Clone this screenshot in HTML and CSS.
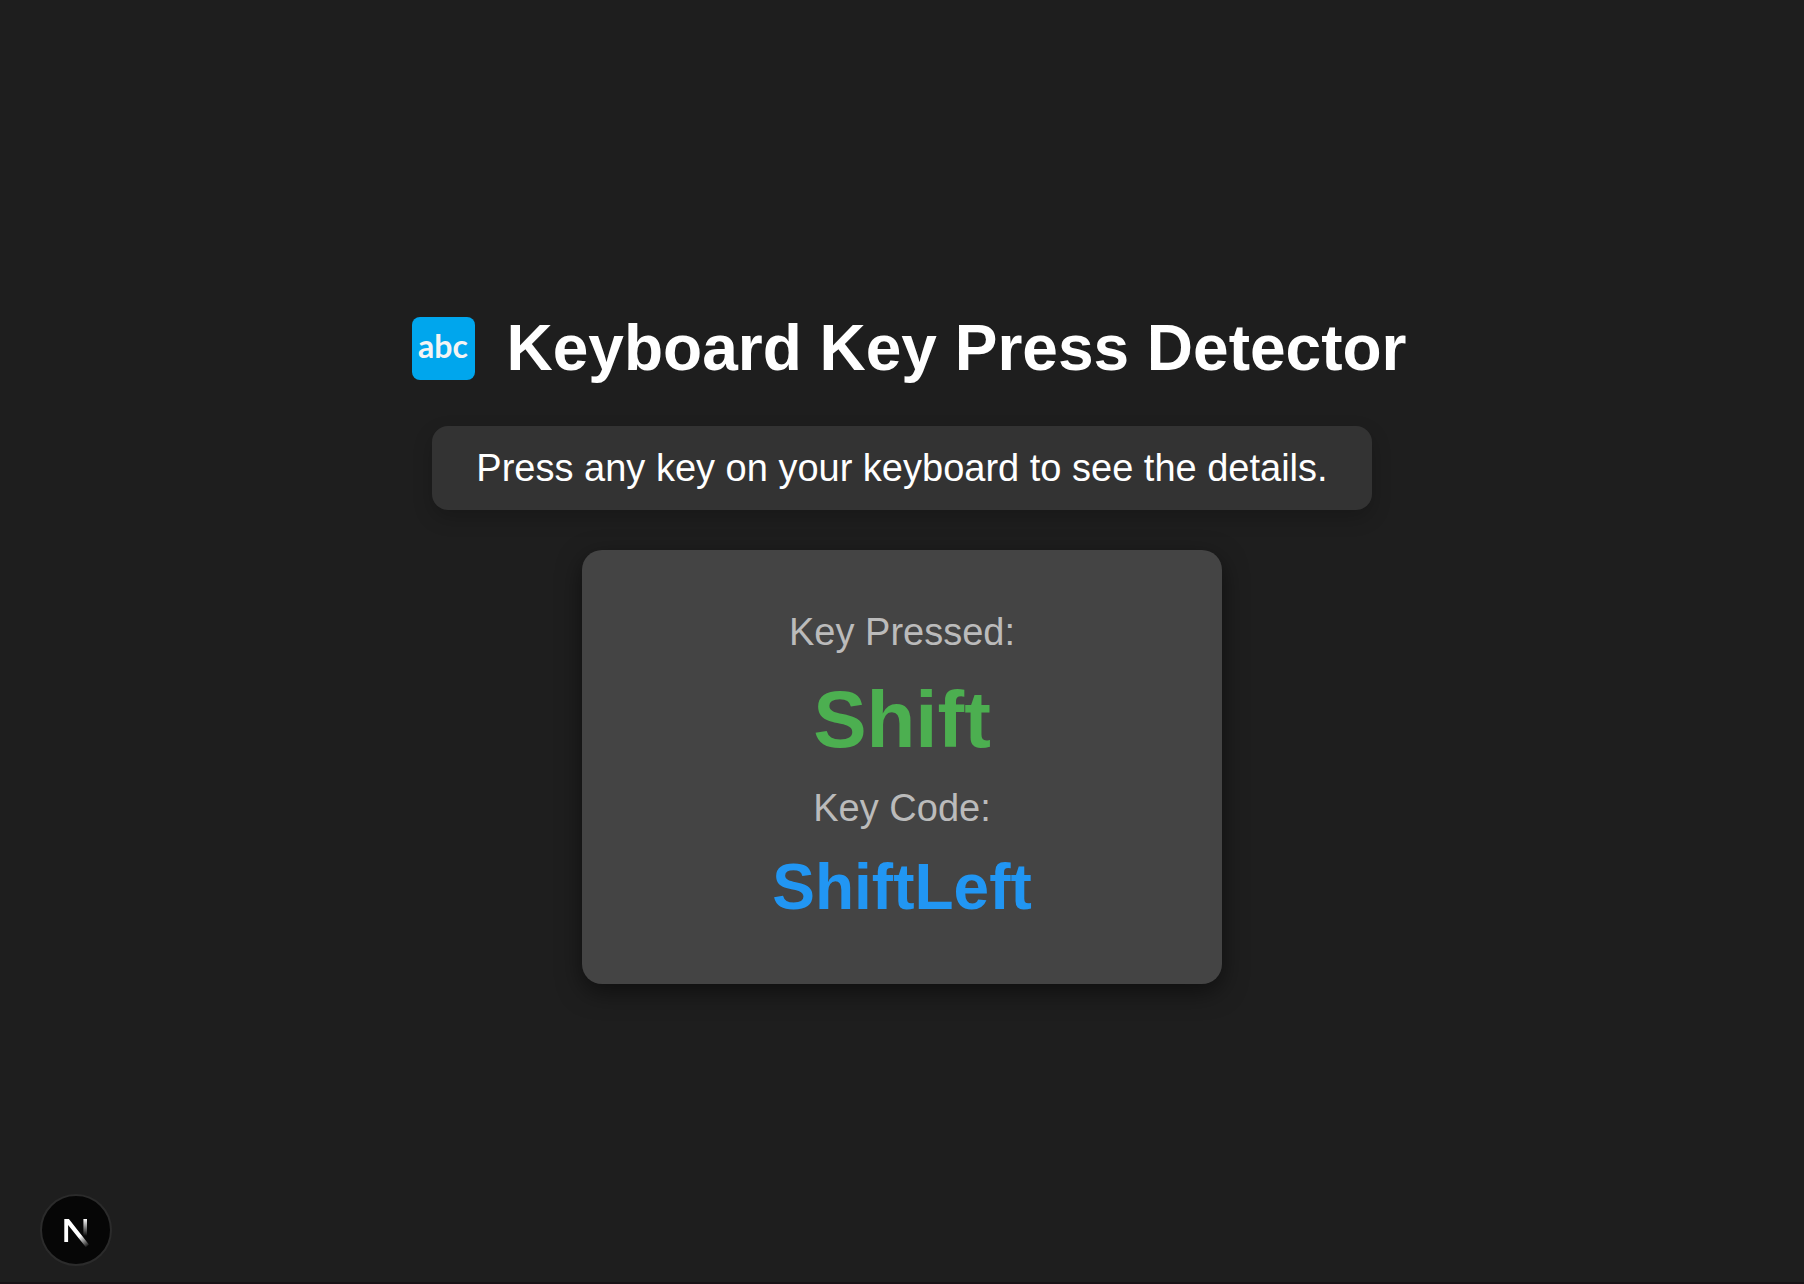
FILE: index.html
```html
<!DOCTYPE html>
<html lang="en">
<head>
<meta charset="utf-8">
<meta name="viewport" content="width=device-width, initial-scale=1">
<title>Keyboard Key Press Detector</title>
<link rel="stylesheet" href="styles.css">
</head>
<body>
<main class="page">
  <h1 class="title"><span class="badge">abc</span><span>Keyboard Key Press Detector</span></h1>
  <p class="hint">Press any key on your keyboard to see the details.</p>
  <section class="card">
    <p class="label">Key Pressed:</p>
    <p class="key">Shift</p>
    <p class="label">Key Code:</p>
    <p class="code">ShiftLeft</p>
  </section>
</main>
<button class="devtools" type="button" aria-label="Open Next.js Dev Tools">
  <svg width="72" height="72" viewBox="0 0 72 72" aria-hidden="true">
    <defs>
      <linearGradient id="diag" x1="40" y1="42" x2="48" y2="53" gradientUnits="userSpaceOnUse">
        <stop stop-color="#fff"/><stop offset="1" stop-color="#fff" stop-opacity="0"/>
      </linearGradient>
      <linearGradient id="stem" x1="45" y1="25" x2="45" y2="42" gradientUnits="userSpaceOnUse">
        <stop stop-color="#fff"/><stop offset="1" stop-color="#fff" stop-opacity="0"/>
      </linearGradient>
    </defs>
    <path fill="url(#diag)" d="M24.3 25h4.6l20 25.6-3 2.6L28.1 31v17h-3.8z"/>
    <path fill="url(#stem)" d="M43.4 25h3.6v17h-3.6z"/>
  </svg>
</button>
</body>
</html>
```
FILE: styles.css
```css
* {
  box-sizing: border-box;
}

body {
  margin: 0;
  background: #1e1e1e;
  color: #fff;
  font-family: Arial, "Liberation Sans", sans-serif;
}

.page {
  display: flex;
  flex-direction: column;
  align-items: center;
  justify-content: center;
  min-height: 100vh;
  padding: 36px 24px 24px;
  border-bottom: 2px solid #181216;
  text-align: center;
}

.title {
  display: flex;
  align-items: center;
  gap: 32px;
  margin: 0 0 40px;
  padding-left: 14px;
  font-size: 64px;
  line-height: 76px;
}

.badge {
  width: 63px;
  height: 63px;
  border-radius: 8px;
  background: #00a6ed;
  color: #f4f4f4;
  font: 700 32px/58px Lato, sans-serif;
}

.hint {
  margin: 0 0 40px;
  padding: 20px 44px;
  border-radius: 16px;
  background: #333;
  box-shadow: 0 8px 20px rgba(0, 0, 0, 0.2);
  font-size: 38px;
  line-height: 44px;
}

.card {
  width: 640px;
  max-width: 100%;
  padding: 60px 40px;
  border-radius: 20px;
  background: #444;
  box-shadow: 0 8px 24px rgba(0, 0, 0, 0.5);
}

.label,
.key,
.code {
  margin: 0;
}

.label {
  color: #bbb;
  font-size: 38px;
  line-height: 44px;
}

.key {
  margin: 20px 0;
  color: #4caf50;
  font-size: 80px;
  font-weight: 700;
  line-height: 92px;
}

.code {
  margin-top: 20px;
  color: #2196f3;
  font-size: 64px;
  font-weight: 700;
  line-height: 74px;
}

.devtools {
  position: fixed;
  left: 40px;
  bottom: 18px;
  width: 72px;
  height: 72px;
  padding: 0;
  border: 2px solid #2b2b2b;
  border-radius: 50%;
  background: #060606;
}

.devtools svg {
  display: block;
  margin: -2px;
}
```
